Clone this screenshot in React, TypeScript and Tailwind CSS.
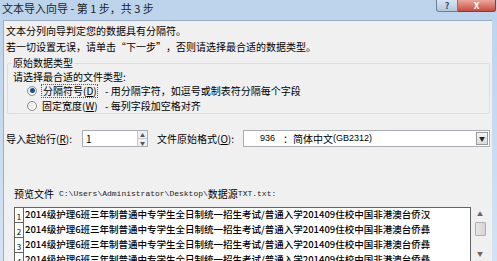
const rows = [
  "2014级护理6班三年制普通中专学生全日制统一招生考试/普通入学201409住校中国非港澳台侨汉",
  "2014级护理6班三年制普通中专学生全日制统一招生考试/普通入学201409住校中国非港澳台侨彝",
  "2014级护理6班三年制普通中专学生全日制统一招生考试/普通入学201409住校中国非港澳台侨彝",
  "2014级护理6班三年制普通中专学生全日制统一招生考试/普通入学201409住校中国非港澳台侨彝",
];

function Radio({ checked }: { checked?: boolean }) {
  return (
    <span className="w-[10px] h-[10px] rounded-full border border-[#8e8f8f] bg-gradient-to-br from-[#e4e4e4] to-white flex items-center justify-center shrink-0">
      {checked && <span className="w-[5px] h-[5px] rounded-full bg-[#1c4f8e]" />}
    </span>
  );
}

export default function App() {
  return (
    <div className="w-[497px] h-[261px] overflow-hidden flex flex-col bg-gradient-to-b from-[#bcd3ec] to-[#d3e3f4] font-['Noto_Sans_CJK_SC',sans-serif] text-[10px] text-black">
      {/* title bar */}
      <div className="h-[20px] flex items-start shrink-0">
        <span className="pl-[2px] pt-[1px] text-[11px] leading-[14px] text-[#1e1e1e]">
          文本导入向导 - 第 1 步，共 3 步
        </span>
        <div className="ml-auto mr-[1px] flex">
          <div className="w-[22px] h-[12px] rounded-bl-[3px] border border-t-0 border-[#6d7f95] bg-gradient-to-b from-[#d9e4f1] to-[#b3c6dd] flex items-center justify-center text-[9px] leading-none text-[#3b4f66] font-bold">
            ?
          </div>
          <div className="w-[38px] h-[12px] rounded-br-[3px] border border-t-0 border-l-0 border-[#8a3a33] bg-gradient-to-b from-[#e8a79c] to-[#c9493d] flex items-center justify-center text-[9px] leading-none text-white font-bold">
            X
          </div>
        </div>
      </div>

      {/* dialog body */}
      <div className="flex-1 mx-[3px] mr-[5px] bg-[#f0f0f0] border-t border-l border-[#9aafc7] flex flex-col">
        <div className="pt-[2px] pl-[2px] leading-[16px]">文本分列向导判定您的数据具有分隔符。</div>
        <div className="pl-[2px] leading-[16px]">
          若一切设置无误，请单击<span className="inline-block w-[10px] text-right">“</span>下一步<span className="inline-block w-[10px]">”</span>，否则请选择最合适的数据类型。
        </div>

        <fieldset className="ml-[3px] mr-[2px] mt-[1px] border border-[#d5dfe5] rounded-[2px] pb-0">
          <legend className="ml-[4px] px-[1px] leading-[14px]">原始数据类型</legend>
          <div className="pl-[5px] leading-[13px]">请选择最合适的文件类型:</div>
          <div className="h-[15px] flex items-center pl-[19px]">
            <Radio checked />
            <span className="ml-[4px] w-[57px] h-[14px] border border-dotted border-[#555] flex items-center pl-[1px]">
              分隔符号(<span className="underline">D</span>)
            </span>
            <span className="ml-[7px]">- 用分隔字符，如逗号或制表符分隔每个字段</span>
          </div>
          <div className="h-[15px] flex items-center pl-[19px]">
            <Radio />
            <span className="ml-[5px] w-[56px]">
              固定宽度(<span className="underline">W</span>)
            </span>
            <span className="ml-[7px]">- 每列字段加空格对齐</span>
          </div>
        </fieldset>

        <div className="mt-[16px] h-[17px] flex items-center">
          <span className="pl-[2px] w-[78px]">
            导入起始行(<span className="underline">R</span>):
          </span>
          <div className="w-[66px] h-[17px] bg-white border border-[#abadb3] flex items-center">
            <span className="pl-[3px] flex-1">1</span>
            <div className="w-[10px] h-full flex flex-col border-l border-[#c8c8c8] bg-[#eef0f3]">
              <div className="flex-1 flex items-center justify-center text-[5px] leading-none text-[#555] border-b border-[#c8c8c8]">▲</div>
              <div className="flex-1 flex items-center justify-center text-[5px] leading-none text-[#555]">▼</div>
            </div>
          </div>
          <span className="ml-[9px] w-[86px]">
            文件原始格式(<span className="underline">O</span>):
          </span>
          <div className="w-[247px] h-[17px] bg-white border border-[#abadb3] flex items-center">
            <span className="pl-[16px] flex-1 flex items-center">
              <span className="font-['Liberation_Sans',sans-serif] text-[9px]">936</span>
              <span className="ml-[8px]">：</span>
              <span>简体中文</span>
              <span className="font-['Liberation_Sans',sans-serif] text-[9px]">(GB2312)</span>
            </span>
            <div className="w-[12px] h-[13px] mr-[1px] border border-[#9a9a9a] bg-gradient-to-b from-[#f4f4f4] to-[#dcdcdc] flex items-center justify-center text-[6px] leading-none text-[#222]">
              ▼
            </div>
          </div>
        </div>

        <div className="mt-[39px] pl-[10px] leading-[16px] flex items-center">
          <span>预览文件</span>
          <span className="ml-[5px] font-['Liberation_Mono',monospace] text-[8px] text-[#222]">C:\Users\Administrator\Desktop\</span>
          <span>数据源</span>
          <span className="font-['Liberation_Mono',monospace] text-[8px] text-[#222]">TXT.txt:</span>
        </div>

        <div className="mt-[5px] ml-[10px] flex">
          <div className="w-[457px] border-t border-l border-[#646464] border-r bg-white flex flex-col">
            {rows.map((r, i) => (
              <div key={i} className="h-[15px] flex">
                <div className="w-[9px] shrink-0 border-r border-b border-[#646464] flex items-end justify-center text-[8px] leading-[10px]">
                  {i + 1}
                </div>
                <div className="pl-[1px] leading-[12px] whitespace-nowrap text-[9.5px] font-medium">{r}</div>
              </div>
            ))}
          </div>
          <div className="ml-[1px] w-[16px] flex flex-col items-center">
            <span className="mt-[2px] text-[6px] leading-[10px] text-[#666]">▲</span>
            <div className="mt-[3px] w-[11px] h-[14px] border border-[#b0b0b0] rounded-[1px] bg-gradient-to-r from-[#e8e8e8] to-[#d4d4d4]" />
            <span className="mt-[13px] text-[6px] leading-[10px] text-[#666]">▼</span>
          </div>
        </div>
      </div>
    </div>
  );
}
